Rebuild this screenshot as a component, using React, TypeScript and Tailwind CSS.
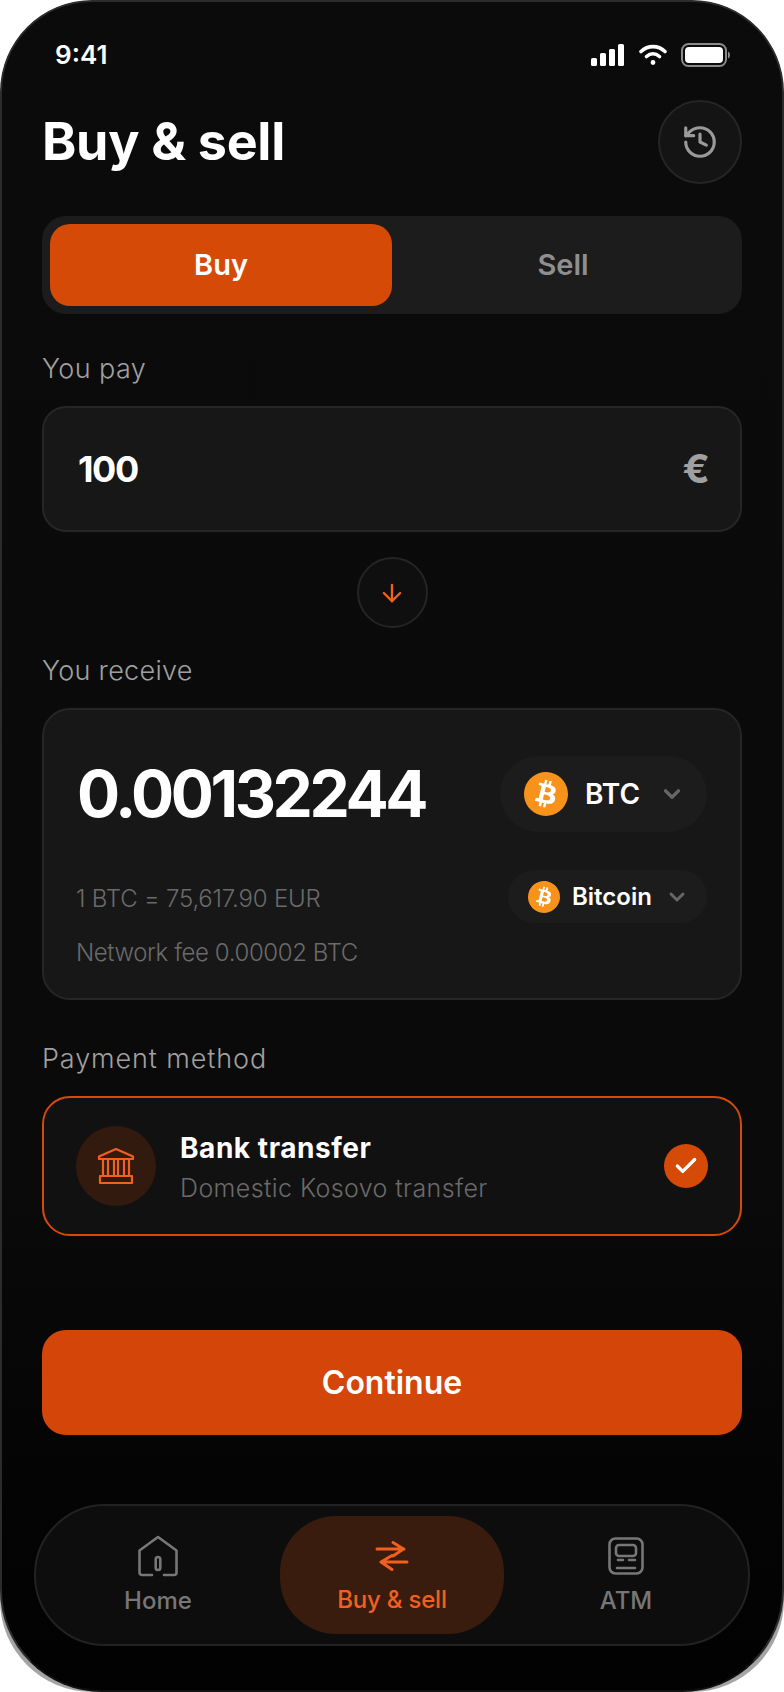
import { History, Check, ChevronDown, ArrowDown } from "lucide-react";

function Btc({ size }: { size: number }) {
  return (
    <svg width={size} height={size} viewBox="0 0 64 64" className="shrink-0">
      <path fill="#f7931a" d="M63.04 39.741c-4.274 17.143-21.638 27.575-38.783 23.301C7.12 58.768-3.313 41.404.962 24.262 5.234 7.117 22.597-3.317 39.737.957c17.144 4.274 27.576 21.64 23.302 38.784z" />
      <path fill="#fff" d="M46.11 27.441c.636-4.258-2.606-6.547-7.039-8.074l1.438-5.768-3.512-.875-1.4 5.616c-.922-.23-1.87-.447-2.812-.662l1.41-5.653-3.509-.875-1.439 5.766c-.764-.174-1.514-.346-2.242-.527l.004-.018-4.842-1.209-.934 3.75s2.605.597 2.55.634c1.422.355 1.68 1.296 1.636 2.042l-1.638 6.571c.098.025.225.061.365.117l-.37-.092-2.297 9.205c-.174.432-.615 1.08-1.609.834.035.051-2.552-.637-2.552-.637l-1.743 4.02 4.57 1.139c.85.213 1.683.436 2.502.646l-1.453 5.835 3.507.875 1.44-5.772c.957.26 1.887.5 2.797.726L27.504 50.8l3.511.875 1.453-5.823c5.987 1.133 10.49.676 12.384-4.739 1.527-4.36-.076-6.875-3.226-8.515 2.294-.529 4.022-2.038 4.483-5.155zM38.087 38.69c-1.085 4.36-8.426 2.003-10.806 1.412l1.928-7.729c2.38.594 10.012 1.77 8.878 6.317zm1.086-11.312c-.99 3.966-7.1 1.951-9.082 1.457l1.748-7.01c1.982.494 8.365 1.416 7.334 5.553z" />
    </svg>
  );
}

function StatusIcons() {
  return (
    <div className="flex items-center">
      <svg width="33" height="22" viewBox="0 0 33 22" fill="#fff">
        <rect x="0" y="14" width="6" height="8" rx="1.5" />
        <rect x="9" y="9" width="6" height="13" rx="1.5" />
        <rect x="18" y="5" width="6" height="17" rx="1.5" />
        <rect x="27" y="0" width="6" height="22" rx="1.5" />
      </svg>
      <svg width="28" height="22" viewBox="0 0 28 22" fill="none" stroke="#fff" strokeWidth="3.6" strokeLinecap="round" className="ml-[15px]">
        <path d="M2 7.5C9 1 19 1 26 7.5" />
        <path d="M7.5 12.5C11.5 9 16.5 9 20.5 12.5" />
        <circle cx="14" cy="18.5" r="1.6" fill="#fff" strokeWidth="1.6" />
      </svg>
      <svg width="49" height="24" viewBox="0 0 49 24" className="ml-[14px]">
        <rect x="1" y="1" width="44" height="22" rx="6.5" fill="none" stroke="#8a8a8a" strokeWidth="2" />
        <rect x="4" y="4" width="38" height="16" rx="4" fill="#fff" />
        <path d="M47 8.5c1.4.5 2 2 2 3.5s-.6 3-2 3.5z" fill="#8a8a8a" />
      </svg>
    </div>
  );
}

function BankIcon() {
  return (
    <svg width="38" height="38" viewBox="0 0 38 38" fill="none" stroke="#f0601f" strokeWidth="2.2" strokeLinejoin="round">
      <path d="M2 9.5 19 2l17 7.5V12H2z" />
      <path d="M6 12v17M11 12v17M17 12v17M21 12v17M27 12v17M32 12v17" />
      <path d="M3 29h32v7H3z" />
    </svg>
  );
}

function HomeIcon() {
  return (
    <svg width="40" height="42" viewBox="0 0 40 42" fill="none" stroke="#777" strokeWidth="2.6" strokeLinecap="round" strokeLinejoin="round">
      <path d="M14 40H4a2.5 2.5 0 0 1-2.500-2.500V15.500L20 2l18.500 13.500V37.500A2.500 2.500 0 0 1 36 40H26" />
      <rect x="17.700" y="22" width="4.600" height="13" rx="2.300" />
    </svg>
  );
}

function SwapIcon() {
  return (
    <svg width="34" height="30" viewBox="0 0 34 30" fill="none" stroke="#f0601f" strokeWidth="3" strokeLinecap="round" strokeLinejoin="round">
      <path d="M2 8h27M18 1.500 28.500 8 18 15" />
      <path d="M32 21H6M17 14.500 6 21l11 7.500" />
    </svg>
  );
}

function AtmIcon() {
  return (
    <svg width="36" height="38" viewBox="0 0 36 38" fill="none" stroke="#777" strokeWidth="2.6" strokeLinecap="round" strokeLinejoin="round">
      <rect x="1.500" y="1.500" width="33" height="35" rx="6" />
      <rect x="8" y="8" width="20" height="11" rx="3" />
      <path d="M10 23h5M21 23h6M9 31h18" />
    </svg>
  );
}

export default function App() {
  const label = "h-[36px] text-[27px] leading-[36px] font-light text-[#a0a0a0]";
  return (
    <div className="w-[784px] h-[1692px] bg-white [font-family:Inter,'Liberation_Sans',sans-serif] overflow-hidden">
      <div className="h-full rounded-[92px] bg-[#a5a5a5] overflow-hidden">
        <div className="h-full rounded-t-[92px] rounded-b-[102px] border-2 border-[#2c2c2c] border-b-[#111] bg-linear-to-b from-[#0b0b0b] via-[#0a0a0a] via-70% to-[#020202] px-[40px] pt-[40px] overflow-hidden">
          <div className="h-[26px] flex items-center justify-between pl-[13px] pr-[12px]">
            <span className="text-[26px] font-semibold text-white leading-[26px]">9:41</span>
            <StatusIcons />
          </div>

          <div className="mt-[32px] h-[84px] flex items-center justify-between">
            <h1 className="text-[52px] font-bold text-white tracking-[-0.3px] leading-none">Buy &amp; sell</h1>
            <div className="w-[84px] h-[84px] rounded-full bg-[#141414] border-2 border-[#252525] flex items-center justify-center">
              <History size={38} color="#9a9a9a" strokeWidth={2} />
            </div>
          </div>

          <div className="mt-[32px] h-[98px] rounded-[24px] bg-[#1c1c1c] p-2 flex">
            <div className="w-[342px] rounded-[20px] bg-[#d64a08] flex items-center justify-center text-[29px] font-semibold text-white">Buy</div>
            <div className="flex-1 flex items-center justify-center text-[29px] font-semibold text-[#8f8f8f]">Sell</div>
          </div>

          <div className={`mt-[37px] tracking-[0.4px] ${label}`}>You pay</div>

          <div className="mt-[19px] h-[126px] rounded-[24px] bg-[#171717] border-2 border-[#262626] flex items-center justify-between pl-[34px] pr-[30px]">
            <span className="text-[36px] font-bold text-white tracking-[-1.4px]">100</span>
            <span className="text-[40px] font-bold text-[#a0a0a0]">€</span>
          </div>

          <div className="mt-[25px] flex justify-center">
            <div className="w-[71px] h-[71px] rounded-full bg-[#0f0f0f] border-2 border-[#252525] flex items-center justify-center">
              <ArrowDown size={28} color="#f0601f" strokeWidth={2} />
            </div>
          </div>

          <div className={`mt-[25px] tracking-[0.3px] ${label}`}>You receive</div>

          <div className="mt-[19px] h-[292px] rounded-[28px] bg-[#171717] border-2 border-[#262626] pl-[34px] pr-[33px] pt-[46px]">
            <div className="h-[76px] flex items-center justify-between">
              <span className="-ml-[1px] text-[64px] font-bold text-white tracking-[-3.4px]">0.00132244</span>
              <div className="h-[76px] w-[207px] rounded-full bg-[#1c1c1c] flex items-center pl-[24px]">
                <Btc size={44} />
                <span className="ml-[17px] w-[60px] text-[28px] font-semibold text-white">BTC</span>
                <ChevronDown size={26} color="#666" strokeWidth={3} className="ml-[14px]" />
              </div>
            </div>
            <div className="mt-[38px] h-[53px] flex items-center justify-between">
              <span className="-ml-[2px] pt-[4px] text-[24px] font-light text-[#6a6a6a] tracking-[-0.2px]">1 BTC = 75,617.90 EUR</span>
              <div className="h-[53px] w-[199px] rounded-full bg-[#1c1c1c] flex items-center pl-[20px]">
                <Btc size={32} />
                <span className="ml-[12px] w-[82px] text-[24px] font-semibold text-white">Bitcoin</span>
                <ChevronDown size={24} color="#666" strokeWidth={3} className="ml-[11px]" />
              </div>
            </div>
            <div className="-ml-[2px] mt-[12px] h-[36px] leading-[36px] text-[24px] font-light text-[#6a6a6a] tracking-[-0.4px]">Network fee 0.00002 BTC</div>
          </div>

          <div className={`mt-[41px] tracking-[0.9px] ${label}`}>Payment method</div>

          <div className="mt-[19px] h-[140px] rounded-[28px] bg-[#111111] border-2 border-[#d64a08] flex items-center pl-[32px] pr-[32px]">
            <div className="w-[80px] h-[80px] rounded-full bg-[#331a0e] flex items-center justify-center">
              <BankIcon />
            </div>
            <div className="ml-[24px] flex-1 pt-[3px]">
              <div className="text-[28px] leading-[36px] font-bold text-white tracking-[0.55px]">Bank transfer</div>
              <div className="mt-[4px] text-[25px] leading-[36px] font-light text-[#6a6a6a] tracking-[0.4px]">Domestic Kosovo transfer</div>
            </div>
            <div className="w-[44px] h-[44px] rounded-full bg-[#d64a08] flex items-center justify-center">
              <Check size={26} color="#fff" strokeWidth={3} />
            </div>
          </div>

          <div className="mt-[94px] h-[105px] rounded-[24px] bg-[#d4450a] flex items-center justify-center text-[32px] font-semibold text-white">Continue</div>

          <div className="mt-[69px] -mx-[8px] h-[142px] rounded-[71px] bg-[#0d0d0d] border-2 border-[#222] grid grid-cols-[244px_224px_1fr] items-center">
            <div className="h-full flex flex-col items-center pt-[29px]">
              <HomeIcon />
              <span className="mt-[6px] text-[24px] font-medium text-[#777] leading-[36px]">Home</span>
            </div>
            <div className="h-[118px] rounded-[56px] bg-[#3a1c0e] flex flex-col items-center pt-[25px]">
              <SwapIcon />
              <span className="mt-[11px] text-[24px] font-medium text-[#f0601f] leading-[36px] tracking-[-0.2px]">Buy &amp; sell</span>
            </div>
            <div className="h-full flex flex-col items-center pt-[31px]">
              <AtmIcon />
              <span className="mt-[8px] text-[24px] font-medium text-[#777] leading-[36px]">ATM</span>
            </div>
          </div>
        </div>
      </div>
    </div>
  );
}
